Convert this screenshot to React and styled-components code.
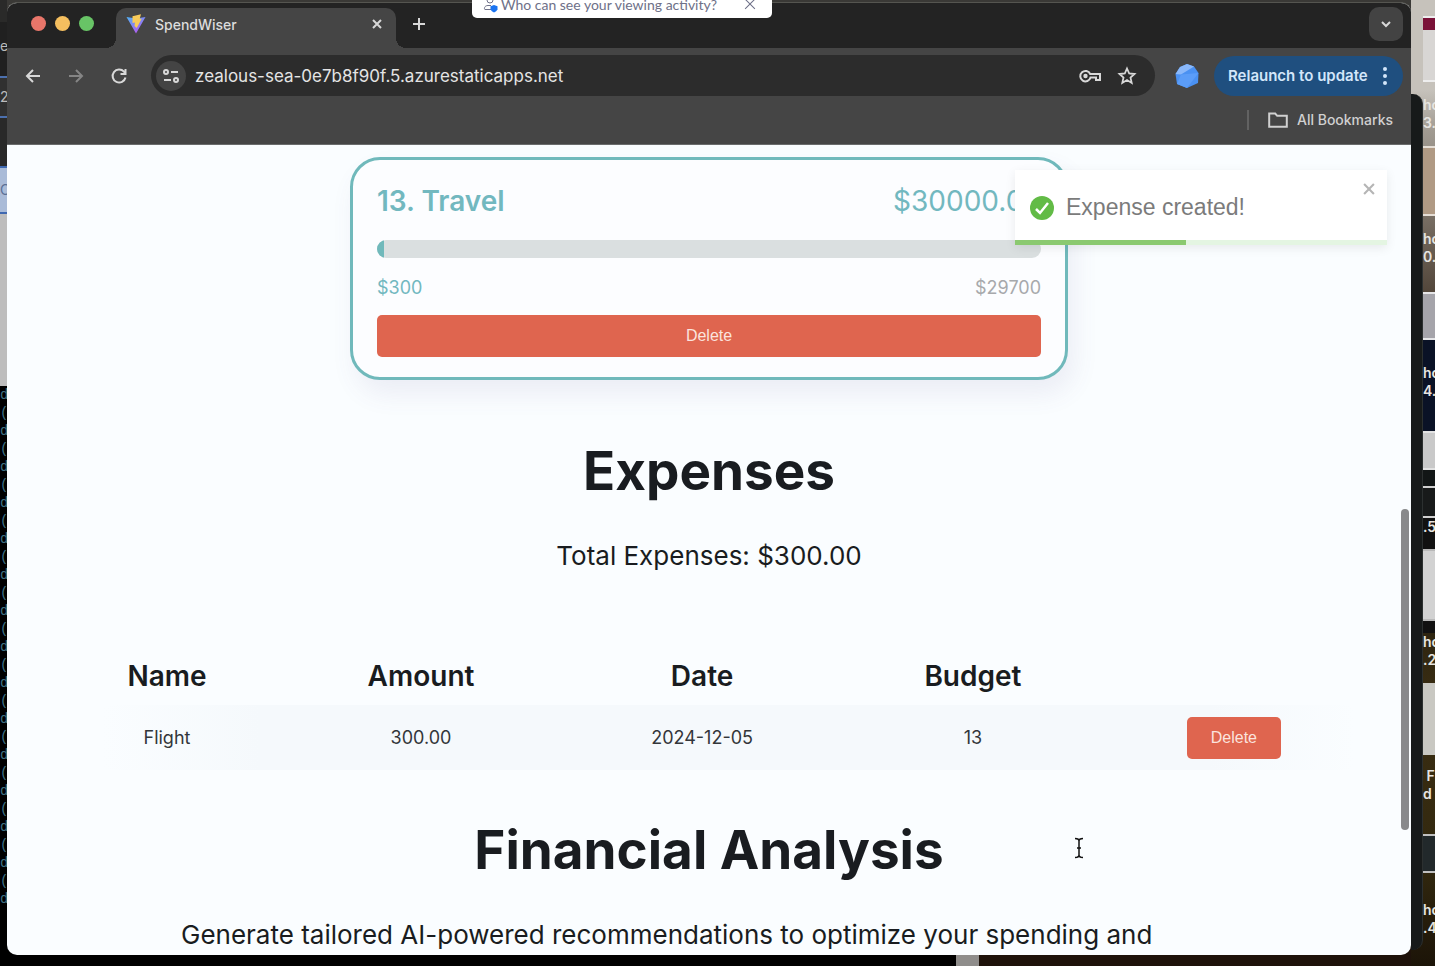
import React from 'react';
import styled, { createGlobalStyle } from 'styled-components';

const Global = createGlobalStyle`
  *, *::before, *::after { box-sizing: border-box; }
  body { margin: 0; background: #0b0b0b; font-family: Inter, "Liberation Sans", sans-serif; }
  button, input { font-family: inherit; border: 0; padding: 0; background: none; }
  button { cursor: pointer; }
  h1, h2, p { margin: 0; }
`;

const Desktop = styled.div`
  position: relative;
  display: grid;
  grid-template-columns: 7px minmax(0, 1fr) 24px;
  height: 100vh;
  overflow: hidden;
  background:
    linear-gradient(90deg, #000 0 956px, #8f8d8b 956px 979px, #1e120a 979px) bottom / 100% 40px no-repeat,
    #3a3936;
`;

const LeftEdge = styled.div`
  display: flex;
  flex-direction: column;
  overflow: hidden;
  background: #000;
`;

const Slice = styled.div`
  flex: 0 0 ${(p) => p.$h}px;
  overflow: hidden;
  background: ${(p) => p.$bg};
  color: ${(p) => p.$fg || '#bbb'};
  font-size: 14px;
  line-height: ${(p) => p.$line || 18}px;
  white-space: nowrap;
  ${(p) => p.$bold && 'font-weight: 600;'}
  ${(p) => p.$edge && `border-top: 2px solid ${p.$edge}; border-bottom: 2px solid ${p.$edge};`}
`;

const Terminal = styled.div`
  flex: 1;
  overflow: hidden;
  color: #3f7286;
  font: 14px/18px "Liberation Mono", monospace;
`;

const RightEdge = styled.div`
  display: grid;
  grid-template-columns: 12px 1fr;
  overflow: hidden;
  background: linear-gradient(#c6c2bb 0 90px, #a19b92 130px, #54483c 290px, #17160f 500px, #3a2d12 700px, #33290f 860px, #1c1408 966px);
`;

const BackWindow = styled.div`
  margin: 94px 0 16px;
  background: #171a1a;
  border-right: 1px solid #2c3030;
  border-radius: 0 10px 10px 0;
`;

const Icons = styled.div`
  display: flex;
  flex-direction: column;
  overflow: hidden;
`;

const Browser = styled.main`
  display: flex;
  flex-direction: column;
  min-height: 0;
  margin: 2px 0 11px;
  overflow: hidden;
  border-radius: 10px;
  border-top: 1px solid #555550;
  background: #fafdff;
`;

const TabStrip = styled.div`
  display: flex;
  align-items: center;
  flex: 0 0 45px;
  padding: 0 8px 4px 24px;
  background: #232323;
`;

const Lights = styled.div`
  display: flex;
  gap: 9px;
  width: 85px;
`;

const Light = styled.button`
  width: 15px;
  height: 15px;
  border-radius: 50%;
  background: ${(p) => p.$color};
`;

const Tab = styled.div`
  position: relative;
  display: flex;
  align-items: center;
  align-self: flex-end;
  width: 280px;
  height: 40px;
  margin-bottom: -4px;
  padding: 0 11px 8px 10px;
  border-radius: 10px 10px 0 0;
  background: #454545;
  color: #dcdcdc;
  font-size: 14px;
  font-weight: 500;
  &::before, &::after {
    content: '';
    position: absolute;
    bottom: 0;
    width: 10px;
    height: 10px;
  }
  &::before { left: -10px; background: radial-gradient(circle at 0 0, transparent 10px, #454545 10px); }
  &::after { right: -10px; background: radial-gradient(circle at 100% 0, transparent 10px, #454545 10px); }
`;

const TabTitle = styled.span`
  flex: 1;
  margin-left: 9px;
`;

const IconButton = styled.button`
  display: grid;
  place-items: center;
  width: ${(p) => p.$w || 20}px;
  height: ${(p) => p.$h || 20}px;
  border-radius: ${(p) => p.$r || 0}px;
  background: ${(p) => p.$bg || 'none'};
  color: ${(p) => p.$c || '#d8d8d8'};
  svg { display: block; }
`;

const Spacer = styled.div`
  flex: 1;
`;

const Toolbar = styled.div`
  display: flex;
  align-items: center;
  flex: 0 0 55px;
  padding: 0 8px 0 16px;
  background: #454545;
`;

const NavButtons = styled.nav`
  display: flex;
  gap: 23px;
  width: 128px;
`;

const AddressBar = styled.div`
  display: flex;
  align-items: center;
  flex: 1;
  height: 41px;
  padding: 0 18px 0 5px;
  border-radius: 21px;
  background: #2c2c2c;
`;

const Address = styled.input`
  flex: 1;
  min-width: 0;
  margin-left: 9px;
  color: #e4e4e4;
  font-size: 17px;
  outline: 0;
`;

const AddressTools = styled.div`
  display: flex;
  gap: 15px;
`;

const Avatar = styled.div`
  display: flex;
  padding: 0 15px 0 20px;
`;

const Relaunch = styled.button`
  display: flex;
  align-items: center;
  justify-content: space-between;
  width: 189px;
  height: 40px;
  padding: 0 16px 0 14px;
  border-radius: 20px;
  background: #1f4f7f;
  color: #d3e6fa;
  font-size: 15px;
  font-weight: 600;
`;

const Bookmarks = styled.div`
  display: flex;
  align-items: center;
  justify-content: flex-end;
  flex: 0 0 42px;
  padding: 0 18px 7px 0;
  border-bottom: 1px solid #6a6c6c;
  background: #454545;
`;

const BookmarkButton = styled.button`
  display: flex;
  align-items: center;
  gap: 9px;
  padding-left: 19px;
  border-left: 2px solid #626262;
  color: #d0d0d0;
  font-size: 14px;
  font-weight: 500;
  line-height: 18px;
`;

const Viewport = styled.div`
  position: relative;
  flex: 1;
  min-height: 0;
  overflow: hidden;
  color: #191c20;
`;

const Page = styled.div`
  display: flex;
  flex-direction: column;
  align-items: center;
  padding: 12px 43px 0;
`;

const Card = styled.section`
  width: 100%;
  max-width: 718px;
  padding: 24px;
  border: 3px solid #70b9bb;
  border-radius: 30px;
  background: #fcfdff;
  box-shadow: 6px 14px 26px rgba(90, 80, 140, 0.09);
`;

const CardRow = styled.div`
  display: flex;
  justify-content: space-between;
  color: #72b8bf;
  font-size: ${(p) => p.$size}px;
  line-height: ${(p) => p.$line}px;
`;

const CardTitle = styled.h2`
  font-size: inherit;
  font-weight: 600;
`;

const Muted = styled.span`
  color: #a7a9ac;
`;

const Meter = styled.div`
  height: 18px;
  margin: 22px 0 18px;
  overflow: hidden;
  border-radius: 9px;
  background: #dadfe0;
`;

const MeterFill = styled.div`
  height: 100%;
  background: #70b9bb;
`;

const DeleteButton = styled.button`
  display: block;
  width: ${(p) => (p.$wide ? '100%' : '94px')};
  height: 42px;
  margin: ${(p) => (p.$wide ? '15px 0 -4px' : '0 auto')};
  border-radius: 5px;
  background: #df654f;
  color: #fbe3de;
  font: 16px "Liberation Sans", sans-serif;
`;

const Title = styled.h1`
  margin-top: ${(p) => p.$top}px;
  font-size: 53px;
  font-weight: 700;
  line-height: 68px;
`;

const Text = styled.p`
  font-size: 26px;
  line-height: 40px;
  white-space: nowrap;
`;

const Total = styled(Text)`
  margin: 31px 0 70px;
`;

const Intro = styled(Text)`
  width: 100%;
  margin-top: 31px;
  padding-left: 131px;
`;

const Table = styled.table`
  width: 100%;
  table-layout: fixed;
  border-collapse: collapse;
  text-align: center;
`;

const Col = styled.col`
  width: ${(p) => p.$share}%;
`;

const Th = styled.th`
  height: 59px;
  padding: 0;
  font-size: 28px;
  font-weight: 600;
`;

const Row = styled.tr`
  background: linear-gradient(90deg, transparent 4%, #f5f9fc 16% 88%, transparent 99%);
`;

const Td = styled.td`
  height: 65px;
  padding: 0;
  color: #33363a;
  font-size: 18px;
`;

const Toast = styled.div`
  position: absolute;
  top: 25px;
  right: 24px;
  display: flex;
  align-items: center;
  width: 372px;
  height: 75px;
  padding: 0 10px 0 15px;
  background: #fff;
  color: #7b7b7b;
  font: 23px "Liberation Sans", sans-serif;
  box-shadow: 0 3px 10px rgba(0, 0, 0, 0.08);
`;

const ToastText = styled.span`
  flex: 1;
  margin-left: 12px;
`;

const ToastClose = styled(IconButton)`
  align-self: flex-start;
  margin-top: 11px;
`;

const ToastBar = styled.div`
  position: absolute;
  inset: auto 0 0;
  height: 5px;
  background: #e4f5e2;
`;

const ToastProgress = styled.div`
  height: 100%;
  background: #8bc970;
`;

const ScrollThumb = styled.div`
  position: absolute;
  top: 364px;
  right: 2px;
  width: 8px;
  height: 321px;
  border-radius: 4px;
  background: #88898b;
`;

const Pointer = styled.svg`
  position: absolute;
  left: 1067px;
  top: 692px;
`;

const Notice = styled.div`
  position: absolute;
  top: -10px;
  left: 472px;
  display: flex;
  align-items: center;
  width: 300px;
  height: 28px;
  padding: 0 14px 0 11px;
  border-radius: 5px;
  background: #fff;
  color: #6e7088;
  font: 14px Lato, sans-serif;
`;

const NoticeText = styled.span`
  flex: 1;
  margin-left: 2px;
  white-space: nowrap;
`;

function Line({ d, size = 20, w = 2, box = 20, children }) {
  return (
    <svg width={size} height={size} viewBox={`0 0 ${box} ${box}`} fill="none" stroke="currentColor" strokeWidth={w} aria-hidden="true">
      <path d={d} />
      {children}
    </svg>
  );
}

const ViteLogo = () => (
  <svg width="20" height="20" viewBox="0 0 20 20" aria-hidden="true">
    <defs>
      <linearGradient id="vite" x1="0" y1="0" x2="0.6" y2="1">
        <stop offset="0" stopColor="#4fb4f7" />
        <stop offset="1" stopColor="#b45af0" />
      </linearGradient>
    </defs>
    <path d="M.5 3 10 19.500 19.500 3 10 4.500Z" fill="url(#vite)" />
    <path d="m6.500 2.200 8.500-2-1.300 4.500 2 .1-5 9.200-2.200-2 .5-3.500-2.500.5Z" fill="#f8cb5a" />
  </svg>
);

const columns = [
  ['Name', 17.75],
  ['Amount', 20.8],
  ['Date', 21.85],
  ['Budget', 19.25],
  ['', 20.35],
];

const expenses = [{ name: 'Flight', amount: '300.00', date: '2024-12-05', budget: '13' }];

export default function App() {
  return (
    <>
      <Global />
      <Desktop>
        <LeftEdge aria-hidden="true">
          <Slice $h={22} $bg="#2a2a29" />
          <Slice $h={54} $bg="#202020" $line={48}>e</Slice>
          <Slice $h={42} $bg="#303030" $edge="#4c70ae" $line={38}>2</Slice>
          <Slice $h={48} $bg="#292929" />
          <Slice $h={48} $bg="#a9bbd8" $fg="#5a6f94" $edge="#3f68b0" $line={44}>C</Slice>
          <Slice $h={172} $bg="#bdbdbd" />
          <Terminal>
            {Array.from({ length: 29 }, (_, i) => (
              <div key={i}>{i % 2 ? '(' : 'd'}</div>
            ))}
          </Terminal>
        </LeftEdge>

        <Browser>
          <TabStrip>
            <Lights>
              <Light $color="#e9766a" aria-label="Close window" />
              <Light $color="#f5bf5f" aria-label="Minimize window" />
              <Light $color="#68c466" aria-label="Zoom window" />
            </Lights>
            <Tab>
              <ViteLogo />
              <TabTitle>SpendWiser</TabTitle>
              <IconButton $w={16} aria-label="Close tab">
                <Line size={16} w={2.5} d="m5 5 10 10M15 5 5 15" />
              </IconButton>
            </Tab>
            <IconButton $w={46} aria-label="New tab">
              <Line d="M10 4v12M4 10h12" />
            </IconButton>
            <Spacer />
            <IconButton $w={34} $h={34} $r={10} $bg="#434343" aria-label="Search tabs">
              <Line d="m6 8 4 4 4-4" />
            </IconButton>
          </TabStrip>

          <Toolbar>
            <NavButtons>
              <IconButton aria-label="Back"><Line d="M17 10H4M10 4l-6 6 6 6" /></IconButton>
              <IconButton $c="#858585" aria-label="Forward"><Line d="M3 10h13M10 4l6 6-6 6" /></IconButton>
              <IconButton aria-label="Reload">
                <Line d="M16.500 11.500A6.500 6.500 0 1 1 15 5.700L16 7M16.500 3v5h-5" />
              </IconButton>
            </NavButtons>
            <AddressBar>
              <IconButton $w={30} $h={30} $r={15} $bg="#444" aria-label="Site information">
                <Line d="M10 6h7M3 14h7">
                  <circle cx="5" cy="6" r="2" />
                  <circle cx="15" cy="14" r="2" />
                </Line>
              </IconButton>
              <Address aria-label="Address" defaultValue="zealous-sea-0e7b8f90f.5.azurestaticapps.net" />
              <AddressTools>
                <IconButton $w={24} aria-label="Passwords">
                  <svg width="24" height="20" viewBox="0 0 24 20" fill="none" stroke="currentColor" strokeWidth="2" aria-hidden="true">
                    <path d="M12.200 8H22v6h-4v-2.500h-5.500A5.200 5.200 0 1 1 12.200 8Z" />
                    <circle cx="7.500" cy="10" r="1.200" fill="currentColor" />
                  </svg>
                </IconButton>
                <IconButton aria-label="Bookmark this page">
                  <Line w={1.8} d="m10 2.500 2.200 5 5.300.5-4 3.600 1.200 5.300-4.700-2.800-4.700 2.800 1.200-5.300-4-3.600 5.300-.5Z" />
                </IconButton>
              </AddressTools>
            </AddressBar>
            <Avatar>
              <svg width="24" height="24" viewBox="0 0 24 24" role="img" aria-label="Profile">
                <path d="M12 0 19 2.500 23.500 9 23 19 12 24 2 20 .5 10 5 3Z" fill="#4a91f2" />
                <path d="M5 3 12 0l7 2.500-13 8L.5 10Z" fill="#8ab8fa" />
                <path d="m6 10.500 17.500-1.500L12 24 2 20Z" fill="#5b9df8" />
              </svg>
            </Avatar>
            <Relaunch>
              Relaunch to update
              <svg width="4" height="18" viewBox="0 0 4 18" fill="currentColor" aria-hidden="true">
                <circle cx="2" cy="2" r="2" /><circle cx="2" cy="9" r="2" /><circle cx="2" cy="16" r="2" />
              </svg>
            </Relaunch>
          </Toolbar>

          <Bookmarks>
            <BookmarkButton>
              <Line d="M1.200 3.500h6l2 2.300h9.600v11H1.200Z" />
              All Bookmarks
            </BookmarkButton>
          </Bookmarks>

          <Viewport>
            <Page>
              <Card>
                <CardRow $size={28} $line={34}>
                  <CardTitle>13. Travel</CardTitle>
                  <span>$30000.00</span>
                </CardRow>
                <Meter role="progressbar" aria-label="Travel budget spent" aria-valuenow={1}>
                  <MeterFill style={{ width: `${(300 / 30000) * 100}%` }} />
                </Meter>
                <CardRow $size={18} $line={24}>
                  <span>$300</span>
                  <Muted>$29700</Muted>
                </CardRow>
                <DeleteButton $wide>Delete</DeleteButton>
              </Card>

              <Title $top={57}>Expenses</Title>
              <Total>Total Expenses: $300.00</Total>

              <Table>
                <colgroup>
                  {columns.map(([label, share]) => <Col key={label} $share={share} />)}
                </colgroup>
                <thead>
                  <tr>{columns.map(([label]) => <Th key={label} scope="col">{label}</Th>)}</tr>
                </thead>
                <tbody>
                  {expenses.map((e) => (
                    <Row key={e.name}>
                      <Td>{e.name}</Td>
                      <Td>{e.amount}</Td>
                      <Td>{e.date}</Td>
                      <Td>{e.budget}</Td>
                      <Td><DeleteButton>Delete</DeleteButton></Td>
                    </Row>
                  ))}
                </tbody>
              </Table>

              <Title $top={46}>Financial Analysis</Title>
              <Intro>Generate tailored AI-powered recommendations to optimize your spending and</Intro>
            </Page>

            <Toast role="status">
              <svg width="24" height="24" viewBox="0 0 24 24" aria-hidden="true">
                <circle cx="12" cy="12" r="12" fill="#62bb46" />
                <path d="m6 13 4 4 8-10" fill="none" stroke="#fff" strokeWidth="2.500" />
              </svg>
              <ToastText>Expense created!</ToastText>
              <ToastClose $w={16} $h={16} $c="#b5b5b5" aria-label="Dismiss">
                <Line size={14} w={3} d="m3 3 14 14M17 3 3 17" />
              </ToastClose>
              <ToastBar><ToastProgress style={{ width: '46%' }} /></ToastBar>
            </Toast>
            <ScrollThumb />
            <Pointer width="10" height="22" viewBox="0 0 10 22" fill="none" stroke="#111" strokeWidth="1.500" aria-hidden="true">
              <path d="M1 1.500c2 0 4 .5 4 2.500v14c0 2-2 2.500-4 2.500M9 1.500C7 1.500 5 2 5 4M5 18c0 2 2 2.500 4 2.500M3 11h4" />
            </Pointer>
          </Viewport>
        </Browser>

        <RightEdge aria-hidden="true">
          <BackWindow />
          <Icons>
            <Slice $h={16} $bg="transparent" />
            <Slice $h={66} $bg="linear-gradient(#7a1238 0 12px, #d8d6d4 12px)" $edge="#eee" />
            <Slice $h={14} $bg="transparent" />
            <Slice $h={50} $bg="transparent" $fg="#e6e4e0" $bold>ho<br />3.0</Slice>
            <Slice $h={70} $bg="#b09a84" $edge="#e5ded6" />
            <Slice $h={14} $bg="transparent" />
            <Slice $h={62} $bg="transparent" $fg="#e6e4e0" $bold>ho<br />0.0</Slice>
            <Slice $h={48} $bg="#a5a4aa" $edge="#e6e6e8" />
            <Slice $h={24} $bg="#0a1226" />
            <Slice $h={67} $bg="#0a1226" $fg="#e6e4e0" $bold>ho<br />4.0</Slice>
            <Slice $h={39} $bg="#c9c9c9" $edge="#e2e2e2" />
            <Slice $h={16} $bg="#121616" />
            <Slice $h={32} $bg="#181a1a" $edge="#d0d0d0" />
            <Slice $h={31} $bg="#111" $fg="#e6e4e0" $bold>.5</Slice>
            <Slice $h={72} $bg="#d2d2d2" $edge="#b9b9b9" />
            <Slice $h={12} $bg="#111" />
            <Slice $h={50} $bg="transparent" $fg="#e6e4e0" $bold>ho<br />.2</Slice>
            <Slice $h={72} $bg="#c9c8c2" />
            <Slice $h={12} $bg="transparent" />
            <Slice $h={67} $bg="transparent" $fg="#e6e4e0" $bold>&nbsp;F<br />d</Slice>
            <Slice $h={39} $bg="#22292b" $edge="#c0c0c0" />
            <Slice $h={28} $bg="transparent" />
            <Slice $h={50} $bg="transparent" $fg="#e6e4e0" $bold>ho<br />.4</Slice>
          </Icons>
        </RightEdge>

        <Notice>
          <svg width="16" height="20" viewBox="0 0 16 20" fill="none" stroke="#6e7088" aria-hidden="true">
            <circle cx="7" cy="6" r="3" />
            <path d="M8 15.500H2c-1 0-1-4 3-4h3" />
            <path d="m11 11 3.500 1.200v3.300Q13.500 17.500 11 18.500 8.500 17.500 7.500 15.500v-3.300Z" fill="#1a73f0" stroke="none" />
          </svg>
          <NoticeText>Who can see your viewing activity?</NoticeText>
          <IconButton $w={16} $h={16} $c="#6e7088" aria-label="Close notice">
            <Line size={14} w={1.5} d="m3 3 14 14M17 3 3 17" />
          </IconButton>
        </Notice>
      </Desktop>
    </>
  );
}
